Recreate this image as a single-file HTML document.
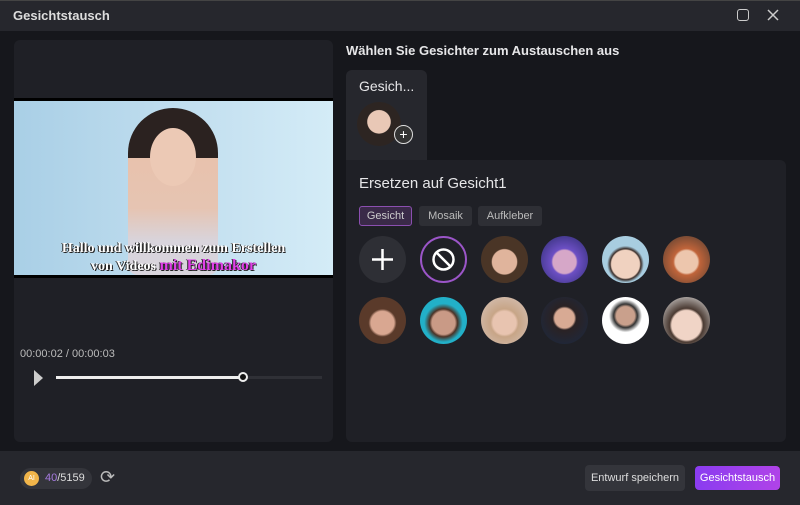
<!DOCTYPE html>
<html><head><style>
*{margin:0;padding:0;box-sizing:border-box}
body{width:800px;height:505px;background:#16171c;font-family:"Liberation Sans",sans-serif;color:#e6e6e8;position:relative;overflow:hidden}
.a{position:absolute}
.f{position:absolute;width:47px;height:47px;border-radius:50%}
</style></head><body>
<div class="a" style="left:0;top:0;width:800px;height:31px;background:#26272d;border-top:1px solid #444"></div>
<div class="a" style="left:13px;top:8px;font-size:13px;font-weight:bold;color:#ddd">Gesichtstausch</div>
<div class="a" style="left:737px;top:9px;width:12px;height:12px;border:1.5px solid #ccc;border-radius:3px"></div>
<svg class="a" style="left:767px;top:9px" width="12" height="12"><path d="M1 1L11 11M11 1L1 11" stroke="#ccc" stroke-width="1.5"/></svg>

<div class="a" style="left:14px;top:40px;width:319px;height:402px;background:#1f2026;border-radius:6px"></div>
<div class="a" style="left:14px;top:98px;width:319px;height:180px;background:#000"></div>
<div class="a" style="left:14px;top:101px;width:319px;height:174px;background:linear-gradient(90deg,#a9cfe6,#c4e0f0 60%,#d4ecf7)"></div>
<div class="a" style="left:128px;top:108px;width:90px;height:167px;border-radius:45px 45px 10px 10px;background:linear-gradient(#2b2220 0,#2b2220 30%,#e8c2ad 30%,#e6c4b2 60%,#d8d4dc 80%)"></div>
<div class="a" style="left:150px;top:128px;width:46px;height:58px;border-radius:50%;background:#ecc9b5"></div>
<div class="a" style="left:14px;top:240px;width:319px;text-align:center;font-family:'Liberation Serif',serif;font-weight:bold;font-size:14px;line-height:17px;color:#fff;text-shadow:1px 1px 0 #222,-1px 0 0 #222">Hallo und willkommen zum Erstellen<br>von Videos <span style="color:#e040e8;font-size:16px">mit Edimakor</span></div>
<div class="a" style="left:20px;top:348px;font-size:11px;color:#bbb">00:00:02 / 00:00:03</div>
<div class="a" style="left:34px;top:370px;width:0;height:0;border-left:9px solid #ccc;border-top:8px solid transparent;border-bottom:8px solid transparent"></div>
<div class="a" style="left:56px;top:376px;width:266px;height:3px;background:#2f3036"></div>
<div class="a" style="left:56px;top:376px;width:187px;height:3px;background:#eee"></div>
<div class="a" style="left:238px;top:372px;width:10px;height:10px;border-radius:50%;background:#111;border:2px solid #eee"></div>

<div class="a" style="left:346px;top:43px;font-size:13px;font-weight:bold">Wählen Sie Gesichter zum Austauschen aus</div>
<div class="a" style="left:346px;top:70px;width:81px;height:95px;background:#26272d;border-radius:6px 6px 0 0"></div>
<div class="a" style="left:359px;top:78px;font-size:14px">Gesich...</div>
<div class="f" style="left:357px;top:102px;background:radial-gradient(circle at 50% 45%,#e9c8b6 35%,#2d2522 37%);width:44px;height:44px"></div>
<div class="a" style="left:394px;top:125px;width:19px;height:19px;border-radius:50%;background:#333;border:1px solid #ddd;color:#fff;font-size:14px;line-height:16px;text-align:center">+</div>
<div class="a" style="left:346px;top:160px;width:440px;height:282px;background:#1f2026;border-radius:0 6px 6px 6px"></div>
<div class="a" style="left:359px;top:175px;font-size:15px">Ersetzen auf Gesicht1</div>
<div class="a" style="left:359px;top:206px;width:53px;height:20px;border:1px solid #8b4fb0;background:#3a2a48;border-radius:3px;font-size:11px;color:#ccc;text-align:center;line-height:18px">Gesicht</div>
<div class="a" style="left:419px;top:206px;width:53px;height:20px;background:#2e2f35;border-radius:3px;font-size:11px;color:#bbb;text-align:center;line-height:20px">Mosaik</div>
<div class="a" style="left:478px;top:206px;width:64px;height:20px;background:#2e2f35;border-radius:3px;font-size:11px;color:#bbb;text-align:center;line-height:20px">Aufkleber</div>

<div class="f" style="left:359px;top:236px;background:#2e2f35"><svg width="47" height="47"><path d="M23.5 13V34M13 23.5H34" stroke="#fff" stroke-width="2.5"/></svg></div>
<div class="f" style="left:420px;top:236px;border:2px solid #9b55c8;background:#1f2026"><svg width="43" height="43" viewBox="0 0 43 43"><circle cx="21.5" cy="21.5" r="10" fill="none" stroke="#fff" stroke-width="2.5"/><line x1="14.5" y1="14.5" x2="28.5" y2="28.5" stroke="#fff" stroke-width="2.5"/></svg></div>
<div class="f" style="left:481px;top:236px;background:radial-gradient(circle at 50% 55%,#e0b49c 35%,#4a3526 38%)"></div>
<div class="f" style="left:541px;top:236px;background:radial-gradient(circle at 50% 55%,#d6a7c8 33%,#6c4fc4 38%,#2a2a6a)"></div>
<div class="f" style="left:602px;top:236px;background:radial-gradient(circle at 50% 60%,#f0d2c0 38%,#3a2e2a 42%,#a8cde0 50%)"></div>
<div class="f" style="left:663px;top:236px;background:radial-gradient(circle at 50% 55%,#edc6ad 32%,#c0643a 38%,#4a3a30)"></div>
<div class="f" style="left:359px;top:297px;background:radial-gradient(circle at 50% 55%,#d9a791 33%,#5a3a2a 40%)"></div>
<div class="f" style="left:420px;top:297px;background:radial-gradient(circle at 50% 55%,#c99a86 33%,#4a3226 40%,#22b0c8 55%)"></div>
<div class="f" style="left:481px;top:297px;background:radial-gradient(circle at 50% 55%,#e8c4b0 33%,#c7a587 40%,#d8c6be)"></div>
<div class="f" style="left:541px;top:297px;background:radial-gradient(circle at 50% 45%,#d8aa94 28%,#2a2224 34%,#1a2a44)"></div>
<div class="f" style="left:602px;top:297px;background:radial-gradient(circle at 50% 40%,#c9a08c 25%,#333 32%,#fff 45%)"></div>
<div class="f" style="left:663px;top:297px;background:radial-gradient(circle at 50% 60%,#f0d4c6 40%,#4a3a32 46%,#eee)"></div>

<div class="a" style="left:0;top:451px;width:800px;height:54px;background:#26272d"></div>
<div class="a" style="left:20px;top:468px;width:72px;height:21px;border-radius:11px;background:#34353b"></div>
<div class="a" style="left:24px;top:471px;width:15px;height:15px;border-radius:50%;background:#f1b54a;font-size:7px;color:#fff;text-align:center;line-height:15px">AI</div>
<div class="a" style="left:45px;top:472px;font-size:11px;color:#ddd"><span style="color:#a67be0">40</span>/5159</div>
<div class="a" style="left:100px;top:467px;font-size:18px;color:#bbb">⟳</div>
<div class="a" style="left:585px;top:465px;width:100px;height:26px;border-radius:4px;background:#34353b;font-size:11px;color:#ddd;text-align:center;line-height:26px">Entwurf speichern</div>
<div class="a" style="left:695px;top:466px;width:85px;height:24px;border-radius:4px;background:linear-gradient(90deg,#8a3cf0,#b043e8);font-size:11px;color:#fff;text-align:center;line-height:24px">Gesichtstausch</div>
</body></html>
